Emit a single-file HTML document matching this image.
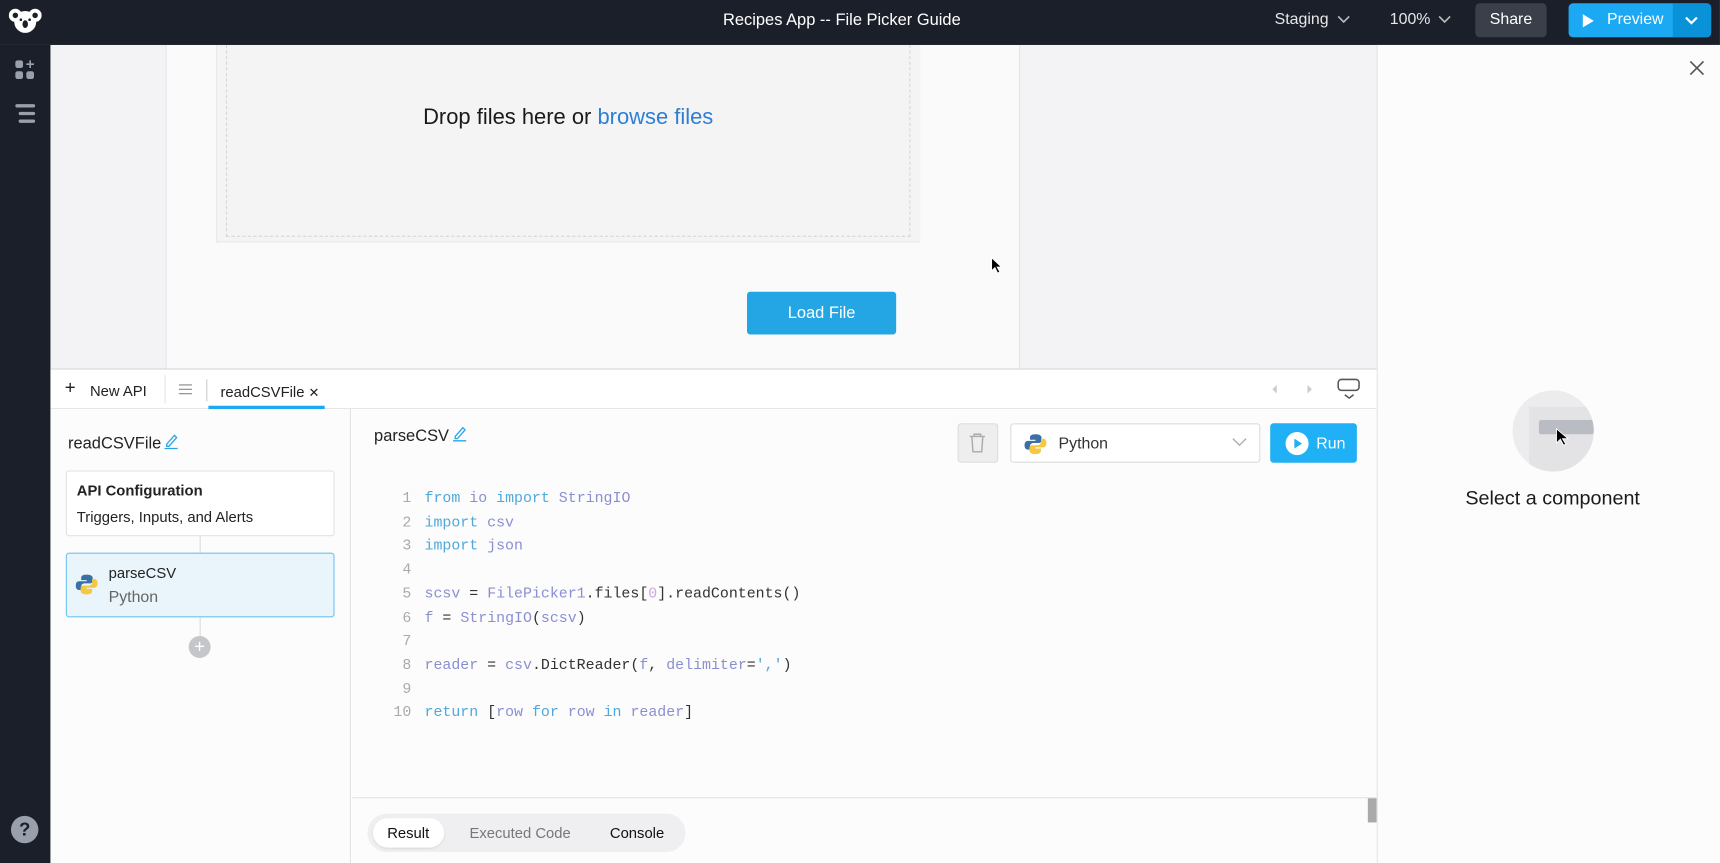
<!DOCTYPE html>
<html><head><meta charset="utf-8"><style>
*{box-sizing:border-box;margin:0;padding:0}
html,body{width:1720px;height:863px;overflow:hidden;background:#fff;font-family:"Liberation Sans",sans-serif}
#w{position:absolute;left:0;top:0;width:1568px;height:787px;transform:scale(1.0969,1.0966);transform-origin:0 0;overflow:hidden}
.a{position:absolute}
.top{left:0;top:0;width:1568px;height:41px;background:#1b1f2a}
.side{left:0;top:41px;width:46px;height:746px;background:#1b1f2a}
.mono{font-family:"Liberation Mono",monospace;font-size:13.6px}
.k{color:#4fa8da}.v{color:#8a8fd2}.d{color:#333}
.ln{position:absolute;width:30px;text-align:right;color:#aaa;left:345px}
.cl{position:absolute;left:387px;white-space:pre}
</style></head><body><div id="w">
<!-- canvas -->
<div class="a" style="left:46px;top:41px;width:1209px;height:295px;background:#f3f3f6"></div>
<div class="a" style="left:151px;top:41px;width:779px;height:295px;background:#fafafa;border-left:1px solid #e6e6ea;border-right:1px solid #e6e6ea"></div>
<div class="a" style="left:197px;top:41px;width:642px;height:180px;background:#f4f4f4;border-left:1px solid #e8e8e8;border-bottom:1px solid #e8e8e8"></div>
<div class="a" style="left:206px;top:41px;width:624px;height:175px;border:1px dashed #d6d6d6;border-top:none"></div>
<div class="a" style="left:197px;width:642px;top:96px;text-align:center;font-size:20px;color:#1a1a1a">Drop files here or <span style="color:#2d7fd3">browse files</span></div>
<div class="a" style="left:681px;top:266px;width:136px;height:39px;border-radius:3px;background:#24a6e5;color:#fff;font-size:15px;text-align:center;line-height:39px">Load File</div>
<svg class="a" style="left:903px;top:234px" width="12" height="16"><path d="M1 1v12l3-3 2.5 5 2-1-2.5-4.5h4z" fill="#000" stroke="#fff" stroke-width=".8"/></svg>

<div class="a top"></div>
<svg class="a" style="left:8px;top:6px" width="30" height="26" viewBox="0 0 30 26"><circle cx="6" cy="8" r="6" fill="#fff"/><circle cx="24" cy="8" r="6" fill="#fff"/><ellipse cx="15" cy="14" rx="10" ry="10" fill="#fff"/><circle cx="6" cy="8" r="2.5" fill="#1b1f2a"/><circle cx="24" cy="8" r="2.5" fill="#1b1f2a"/><ellipse cx="15" cy="16" rx="2.5" ry="3.5" fill="#1b1f2a"/><circle cx="11" cy="12" r="1.2" fill="#1b1f2a"/><circle cx="19" cy="12" r="1.2" fill="#1b1f2a"/></svg>
<div class="a" style="left:0;width:1535px;top:10px;text-align:center;color:#fff;font-size:15px">Recipes App -- File Picker Guide</div>
<div class="a" style="left:1162px;top:10px;color:#e8e8e8;font-size:14.5px">Staging</div>
<svg class="a" style="left:1219px;top:14px" width="12" height="8"><path d="M1 1l5 5 5-5" stroke="#bbb" fill="none" stroke-width="1.5"/></svg>
<div class="a" style="left:1267px;top:10px;color:#e8e8e8;font-size:14.5px">100%</div>
<svg class="a" style="left:1311px;top:14px" width="12" height="8"><path d="M1 1l5 5 5-5" stroke="#bbb" fill="none" stroke-width="1.5"/></svg>
<div class="a" style="left:1345px;top:3px;width:65px;height:31px;border-radius:4px;background:#3a3f4a;color:#fff;font-size:14.5px;text-align:center;line-height:31px">Share</div>
<div class="a" style="left:1430px;top:3px;width:130px;height:31px;border-radius:4px;background:#1aa9f2;overflow:hidden"><div class="a" style="left:95px;top:0;width:35px;height:31px;background:#0a92d8"></div>
<svg class="a" style="left:12px;top:9px" width="12" height="14"><path d="M1 1v12l10-6z" fill="#fff"/></svg>
<div class="a" style="left:35px;top:7px;color:#fff;font-size:14.5px">Preview</div>
<svg class="a" style="left:106px;top:12px" width="12" height="8"><path d="M1 1l5 5 5-5" stroke="#fff" fill="none" stroke-width="2"/></svg></div>
<div class="a side"></div>
<svg class="a" style="left:13px;top:54px" width="20" height="20"><rect x="1" y="1" width="7" height="7" rx="2" fill="#9aa0ab"/><rect x="1" y="11" width="7" height="7" rx="2" fill="#9aa0ab"/><rect x="11" y="11" width="7" height="7" rx="2" fill="#9aa0ab"/><path d="M14.5 1v7M11 4.5h7" stroke="#9aa0ab" stroke-width="1.5"/></svg>
<svg class="a" style="left:13px;top:94px" width="20" height="20"><rect x="1" y="1" width="18" height="3" rx="1.5" fill="#9aa0ab"/><rect x="4" y="8" width="15" height="3" rx="1.5" fill="#9aa0ab"/><rect x="4" y="15" width="15" height="3" rx="1.5" fill="#9aa0ab"/></svg>
<div class="a" style="left:10px;top:744px;width:25px;height:25px;border-radius:50%;background:#9aa0ab;color:#1b1f2a;font-weight:bold;font-size:17px;text-align:center;line-height:25px">?</div>
<!-- right panel -->
<div class="a" style="left:1255px;top:41px;width:313px;height:746px;background:#fcfcfc;border-left:1px solid #e2e2e6"></div>
<svg class="a" style="left:1540px;top:55px" width="14" height="14"><path d="M1 1l12 12M13 1L1 13" stroke="#555" stroke-width="1.5"/></svg>
<div class="a" style="left:1379px;top:356px;width:74px;height:74px;border-radius:50%;background:#ececee;overflow:hidden"><div class="a" style="left:15px;top:15px;width:60px;height:60px;background:#e3e3e6"></div><div class="a" style="left:24px;top:27px;width:50px;height:13px;background:#b9bcc2;border-radius:2px"></div></div>
<svg class="a" style="left:1418px;top:390px" width="14" height="18"><path d="M1 1v13l3.5-3.5 3 5.5 2-1-3-5h5z" fill="#000" stroke="#fff" stroke-width=".8"/></svg>
<div class="a" style="left:1259px;width:313px;top:444px;text-align:center;font-size:18px;color:#1a1a1a">Select a component</div>
<!-- bottom tabs -->
<div class="a" style="left:46px;top:336px;width:1209px;height:37px;background:#fff;border-top:1.5px solid #d4d6da;border-bottom:1px solid #e6e6ea"></div>
<div class="a" style="left:59px;top:344px;font-size:17px;color:#222">+</div>
<div class="a" style="left:82px;top:349px;font-size:13.5px;color:#222">New API</div>
<div class="a" style="left:150px;top:342px;width:1px;height:26px;background:#e6e6ea"></div>
<svg class="a" style="left:163px;top:350px" width="12" height="10"><path d="M0 1h12M0 5h12M0 9h12" stroke="#888" stroke-width="1"/></svg>
<div class="a" style="left:188px;top:346px;width:1px;height:20px;background:#ccc"></div>
<div class="a" style="left:201px;top:350px;font-size:13.5px;color:#222">readCSVFile <span style="font-size:12px">✕</span></div>
<div class="a" style="left:190px;top:370px;width:106px;height:3px;background:#1aa9f2"></div>
<svg class="a" style="left:1158px;top:350px" width="40" height="10"><path d="M6 1l-4 4 4 4z" fill="#ccc"/><path d="M34 1l4 4-4 4z" fill="#ccc"/></svg>
<svg class="a" style="left:1219px;top:345px" width="22" height="22"><rect x="1" y="1" width="19" height="10" rx="3" fill="none" stroke="#555" stroke-width="1.4"/><path d="M7 15l4 3 4-3" stroke="#555" fill="none" stroke-width="1.4"/></svg>
<!-- left list -->
<div class="a" style="left:46px;top:373px;width:274px;height:414px;background:#fcfcfc;border-right:1px solid #e2e2e6"></div>
<div class="a" style="left:62px;top:396px;font-size:15px;color:#222">readCSVFile</div>
<svg class="a" style="left:149px;top:395px" width="14" height="15"><path d="M3 10l7-8 2 2-7 8H3z" fill="none" stroke="#2aa4e6" stroke-width="1.2"/><path d="M1 14h12" stroke="#2aa4e6" stroke-width="1.2"/></svg>
<div class="a" style="left:60px;top:429px;width:245px;height:60px;background:#fff;border:1px solid #e2e2e6;border-radius:3px"></div>
<div class="a" style="left:70px;top:440px;font-size:13.5px;font-weight:bold;color:#222">API Configuration</div>
<div class="a" style="left:70px;top:464px;font-size:13.5px;color:#222">Triggers, Inputs, and Alerts</div>
<div class="a" style="left:182px;top:489px;width:1px;height:15px;background:#ddd"></div>
<div class="a" style="left:60px;top:504px;width:245px;height:59px;background:#e9f4fb;border:1px solid #6cc3ef;border-radius:3px"></div>
<svg class="a" style="left:69px;top:523px" width="20" height="20" viewBox="0 0 20 20"><path d="M10 1c-4 0-5 1.5-5 3v2h5v1H3c-2 0-3 2-3 4s1 4 3 4h2v-3c0-2 1.5-3 3-3h5c1.5 0 2.5-1 2.5-2.5V4c0-1.5-1.5-3-5.5-3z" fill="#3a6fa8"/><path d="M10 19c4 0 5-1.5 5-3v-2h-5v-1h7c2 0 3-2 3-4s-1-4-3-4h-2v3c0 2-1.5 3-3 3H7c-1.5 0-2.5 1-2.5 2.5V16c0 1.5 1.5 3 5.5 3z" fill="#f5c842"/></svg>
<div class="a" style="left:99px;top:515px;font-size:13.5px;color:#222">parseCSV</div>
<div class="a" style="left:99px;top:537px;font-size:14.5px;color:#666">Python</div>
<div class="a" style="left:182px;top:563px;width:1px;height:18px;background:#ddd"></div>
<div class="a" style="left:172px;top:580px;width:20px;height:20px;border-radius:50%;background:#c4c6ca;color:#fff;text-align:center;line-height:20px;font-size:17px">+</div>
<!-- editor -->
<div class="a" style="left:321px;top:374px;width:934px;height:413px;background:#fcfcfc"></div>
<div class="a" style="left:341px;top:389px;font-size:15px;color:#222">parseCSV</div>
<svg class="a" style="left:412px;top:388px" width="14" height="15"><path d="M3 10l7-8 2 2-7 8H3z" fill="none" stroke="#2aa4e6" stroke-width="1.2"/><path d="M1 14h12" stroke="#2aa4e6" stroke-width="1.2"/></svg>
<div class="a" style="left:873px;top:386px;width:37px;height:36px;background:#eeeeef;border:1px solid #ddd;border-radius:3px"></div>
<svg class="a" style="left:883px;top:395px" width="16" height="18"><path d="M1 3h14M5 3V1h6v2M3 3l1 14h8l1-14" fill="none" stroke="#aaa" stroke-width="1.3"/></svg>
<div class="a" style="left:921px;top:386px;width:228px;height:36px;background:#fff;border:1px solid #ddd;border-radius:3px"></div>
<svg class="a" style="left:934px;top:395px" width="20" height="20" viewBox="0 0 20 20"><path d="M10 1c-4 0-5 1.5-5 3v2h5v1H3c-2 0-3 2-3 4s1 4 3 4h2v-3c0-2 1.5-3 3-3h5c1.5 0 2.5-1 2.5-2.5V4c0-1.5-1.5-3-5.5-3z" fill="#3a6fa8"/><path d="M10 19c4 0 5-1.5 5-3v-2h-5v-1h7c2 0 3-2 3-4s-1-4-3-4h-2v3c0 2-1.5 3-3 3H7c-1.5 0-2.5 1-2.5 2.5V16c0 1.5 1.5 3 5.5 3z" fill="#f5c842"/></svg>
<div class="a" style="left:965px;top:397px;font-size:14.5px;color:#333">Python</div>
<svg class="a" style="left:1123px;top:399px" width="14" height="9"><path d="M1 1l6 6 6-6" stroke="#aaa" fill="none" stroke-width="1.2"/></svg>
<div class="a" style="left:1158px;top:386px;width:79px;height:36px;background:#1fb0f5;border-radius:3px"></div>
<div class="a" style="left:1172px;top:394px;width:21px;height:21px;border-radius:50%;background:#fff"></div>
<svg class="a" style="left:1179px;top:399px" width="9" height="11"><path d="M1 1v9l7-4.5z" fill="#1fb0f5"/></svg>
<div class="a" style="left:1200px;top:397px;font-size:14.5px;color:#fff">Run</div>
<!-- code -->
<div class="mono">
<div class="ln" style="top:448px">1</div><div class="cl" style="top:448px"><span class="k">from</span> <span class="v">io</span> <span class="k">import</span> <span class="v">StringIO</span></div>
<div class="ln" style="top:470px">2</div><div class="cl" style="top:470px"><span class="k">import</span> <span class="v">csv</span></div>
<div class="ln" style="top:491px">3</div><div class="cl" style="top:491px"><span class="k">import</span> <span class="v">json</span></div>
<div class="ln" style="top:513px">4</div>
<div class="ln" style="top:535px">5</div><div class="cl" style="top:535px"><span class="v">scsv</span> <span class="d">=</span> <span class="v">FilePicker1</span><span class="d">.files[</span><span style="color:#c9a8e0">0</span><span class="d">].readContents()</span></div>
<div class="ln" style="top:557px">6</div><div class="cl" style="top:557px"><span class="v">f</span> <span class="d">=</span> <span class="v">StringIO</span><span class="d">(</span><span class="v">scsv</span><span class="d">)</span></div>
<div class="ln" style="top:578px">7</div>
<div class="ln" style="top:600px">8</div><div class="cl" style="top:600px"><span class="v">reader</span> <span class="d">=</span> <span class="v">csv</span><span class="d">.DictReader(</span><span class="v">f</span><span class="d">,</span> <span class="v">delimiter</span><span class="d">=</span><span class="k">','</span><span class="d">)</span></div>
<div class="ln" style="top:622px">9</div>
<div class="ln" style="top:643px">10</div><div class="cl" style="top:643px"><span class="k">return</span> <span class="d">[</span><span class="v">row</span> <span class="k">for</span> <span class="v">row</span> <span class="k">in</span> <span class="v">reader</span><span class="d">]</span></div>
</div>
<!-- results -->
<div class="a" style="left:321px;top:727px;width:934px;height:60px;background:#fcfcfc;border-top:1px solid #e2e2e6"></div>
<div class="a" style="left:335px;top:742px;width:290px;height:35px;border-radius:18px;background:#efeff1"></div>
<div class="a" style="left:340px;top:746px;width:65px;height:27px;border-radius:14px;background:#fff;box-shadow:0 1px 2px rgba(0,0,0,.1)"></div>
<div class="a" style="left:353px;top:752px;font-size:13.5px;color:#111">Result</div>
<div class="a" style="left:428px;top:752px;font-size:13.5px;color:#777">Executed Code</div>
<div class="a" style="left:556px;top:752px;font-size:13.5px;color:#111">Console</div>
<div class="a" style="left:1247px;top:728px;width:8px;height:22px;background:#aaa"></div>
</div></body></html>
